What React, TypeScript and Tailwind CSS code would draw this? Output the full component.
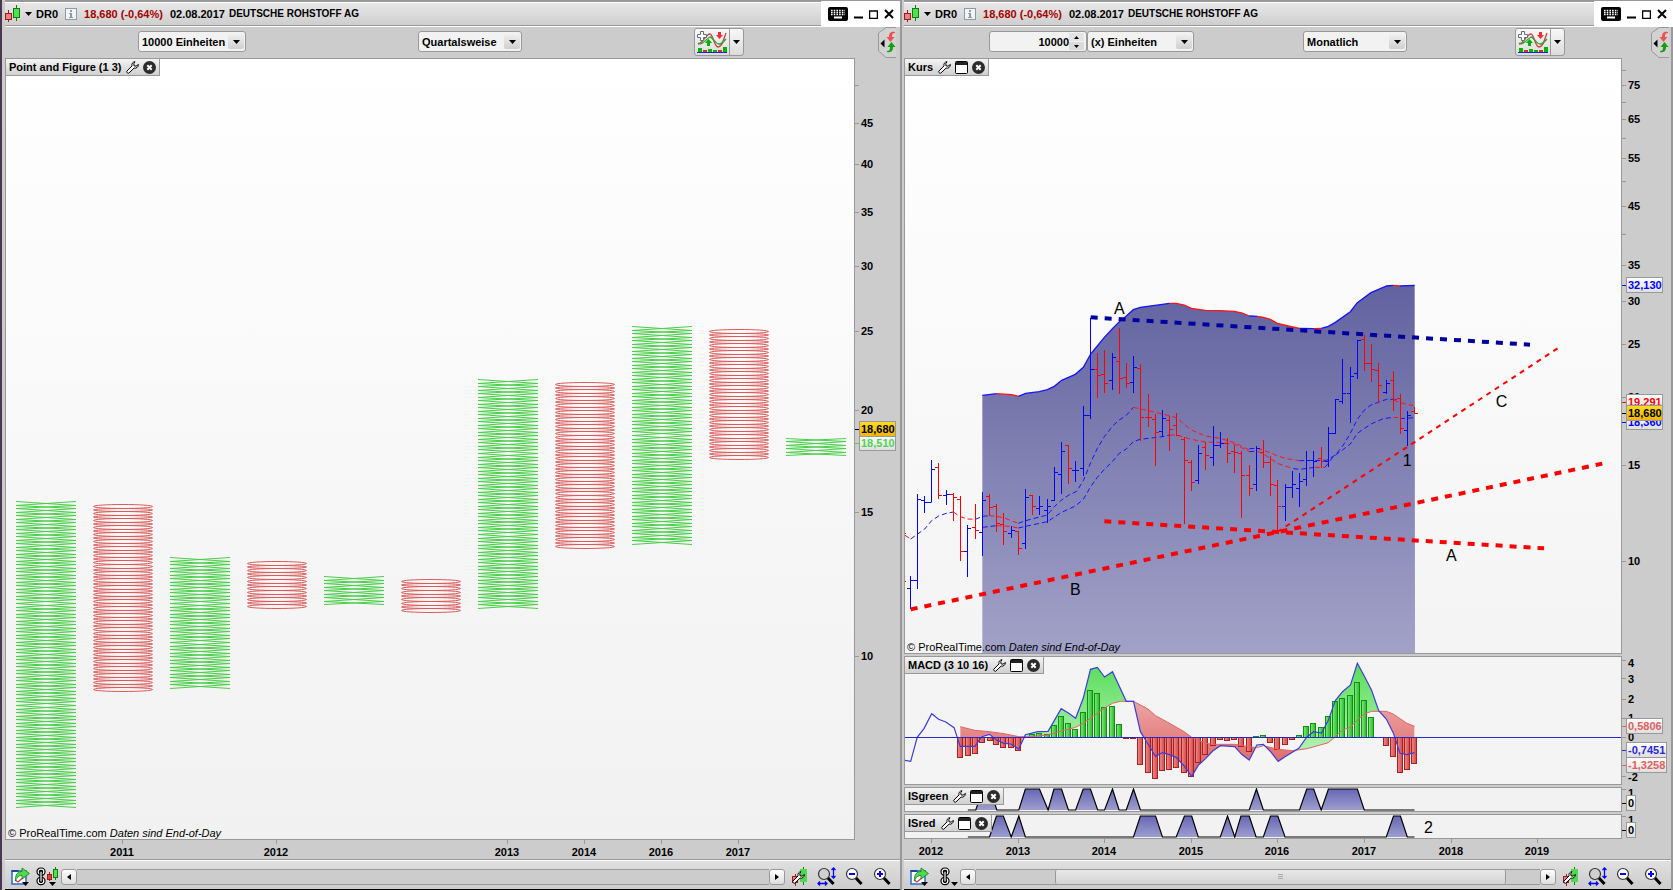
import type { ReactNode } from "react";

type Point = [number, number];

interface Tick {
  y: number;
  label?: string;
  labelY?: number;
}

interface PriceTag {
  y: number;
  label: string;
  color: string;
  width: number;
  highlight?: boolean;
}

// Chart data is kept in thirds of a pixel, measured from the plot's left edge + 15
const sx = (v: number) => (v - 15) / 3;
const mainY = (v: number) => v / 3 + 211;
const macdY = (v: number) => (v - 51) / 3;

const toPriceScale = (points: Point[]): Point[] => points.map(([x, y]) => [x * 1.0332, y]);

const columns = [
  { up: true, top: 442, bottom: 748 },
  { up: false, top: 445, bottom: 632 },
  { up: true, top: 498, bottom: 629 },
  { up: false, top: 502, bottom: 549 },
  { up: true, top: 517, bottom: 545 },
  { up: false, top: 520, bottom: 553 },
  { up: true, top: 320, bottom: 549 },
  { up: false, top: 323, bottom: 489 },
  { up: true, top: 267, bottom: 485 },
  { up: false, top: 270, bottom: 400 },
  { up: true, top: 379, bottom: 396 },
];

// x, high, low, open, close, rising
const bars: [number, number, number, number, number, number][] = [
  [32, 918, 1018, 955, 931, 1], [53, 672, 957, 931, 688, 1], [74, 678, 728, 690, 697, 1],
  [95, 570, 697, 697, 598, 1], [116, 579, 686, 592, 676, 0], [139, 660, 705, 676, 673, 1],
  [160, 669, 753, 673, 683, 0], [181, 678, 873, 688, 844, 0], [202, 765, 920, 844, 774, 1],
  [226, 702, 807, 772, 781, 0], [248, 666, 857, 787, 690, 1], [268, 672, 738, 679, 712, 0],
  [289, 702, 785, 709, 760, 0], [310, 729, 825, 763, 783, 0], [334, 768, 804, 790, 781, 1],
  [355, 783, 855, 784, 835, 0], [377, 657, 837, 820, 682, 1], [397, 675, 735, 676, 709, 0],
  [418, 678, 735, 715, 709, 1], [442, 687, 758, 721, 709, 1], [463, 591, 692, 690, 606, 1],
  [485, 516, 672, 613, 544, 1], [505, 525, 641, 526, 596, 0], [526, 573, 635, 601, 601, 1],
  [550, 408, 618, 595, 436, 1], [572, 145, 446, 436, 298, 1], [592, 249, 384, 298, 316, 0],
  [613, 240, 370, 313, 340, 0], [638, 249, 360, 331, 262, 1], [658, 174, 372, 274, 325, 0],
  [679, 279, 354, 322, 340, 0], [700, 258, 369, 337, 292, 1], [721, 282, 512, 295, 442, 0],
  [745, 372, 471, 442, 442, 0], [767, 432, 587, 448, 487, 0], [788, 420, 500, 484, 445, 1],
  [809, 438, 543, 451, 478, 0], [829, 430, 497, 466, 497, 0], [853, 502, 762, 508, 571, 0],
  [874, 570, 662, 577, 637, 0], [895, 525, 641, 631, 550, 1], [916, 517, 600, 532, 556, 0],
  [940, 468, 588, 562, 526, 1], [961, 486, 534, 526, 520, 1], [982, 504, 579, 520, 550, 0],
  [1003, 525, 609, 545, 548, 0], [1024, 544, 744, 550, 616, 0], [1048, 585, 678, 616, 655, 0],
  [1069, 528, 663, 643, 534, 1], [1090, 510, 594, 547, 577, 0], [1111, 558, 678, 577, 643, 0],
  [1132, 630, 780, 646, 709, 0], [1156, 642, 753, 709, 652, 1], [1177, 603, 684, 652, 643, 1],
  [1198, 609, 711, 655, 634, 1], [1219, 543, 648, 628, 571, 1], [1240, 543, 621, 571, 574, 1],
  [1264, 531, 594, 565, 574, 0], [1285, 471, 591, 574, 490, 1], [1306, 387, 492, 490, 388, 1],
  [1327, 267, 402, 394, 370, 1], [1351, 291, 459, 370, 319, 1], [1372, 210, 327, 310, 211, 1],
  [1393, 195, 303, 208, 280, 0], [1414, 222, 336, 280, 298, 0], [1435, 279, 399, 301, 346, 0],
  [1459, 330, 372, 367, 340, 1], [1480, 303, 423, 331, 388, 0], [1501, 372, 492, 385, 475, 0],
  [1522, 423, 528, 481, 436, 1], [1543, 412, 430, 424, 430, 0],
];

interface Segment {
  up: boolean;
  points: Point[];
}

const upperBand: Segment[] = [
  { up: true, points: [[247, 376], [290, 371]] },
  { up: false, points: [[290, 371], [335, 374], [355, 379]] },
  { up: true, points: [[355, 379], [377, 370], [418, 365], [442, 359], [463, 349], [485, 331], [526, 313], [550, 292], [572, 252], [592, 228], [613, 202], [638, 175], [658, 155], [679, 138], [700, 119], [721, 112], [809, 100]] },
  { up: false, points: [[809, 100], [829, 100], [853, 105], [874, 115], [916, 121], [960, 122], [1003, 124], [1027, 129], [1048, 138]] },
  { up: true, points: [[1048, 138], [1072, 139]] },
  { up: false, points: [[1072, 139], [1090, 142], [1111, 148], [1132, 160], [1165, 168], [1198, 175]] },
  { up: true, points: [[1198, 175], [1242, 176]] },
  { up: false, points: [[1242, 176], [1264, 175]] },
  { up: true, points: [[1264, 175], [1285, 169], [1306, 157], [1351, 125], [1372, 98], [1413, 68], [1460, 48], [1480, 46]] },
  { up: false, points: [[1480, 46], [1500, 48]] },
  { up: true, points: [[1500, 48], [1544, 46]] },
];

const fastAverage: Segment[] = [
  { up: false, points: [[15, 796], [32, 807]] },
  { up: true, points: [[32, 807], [74, 777], [95, 752], [116, 738], [139, 730], [160, 726]] },
  { up: false, points: [[160, 726], [181, 740], [202, 747], [226, 748]] },
  { up: true, points: [[226, 748], [248, 739], [268, 737]] },
  { up: false, points: [[268, 737], [289, 739], [310, 743], [355, 760]] },
  { up: true, points: [[355, 760], [377, 752], [442, 735], [463, 710], [485, 690], [505, 676], [530, 664], [550, 632], [572, 578], [592, 535], [613, 500], [638, 468], [658, 450], [679, 436], [700, 412]] },
  { up: false, points: [[700, 412], [745, 422], [788, 432], [829, 443], [874, 480], [916, 498], [960, 505], [1003, 518], [1024, 528], [1048, 540]] },
  { up: true, points: [[1048, 536], [1072, 535]] },
  { up: false, points: [[1072, 535], [1111, 548], [1132, 558], [1165, 567], [1198, 572]] },
  { up: true, points: [[1198, 572], [1280, 571], [1306, 555], [1327, 530], [1351, 490], [1372, 448], [1393, 420], [1413, 405], [1460, 388], [1480, 388]] },
  { up: false, points: [[1480, 390], [1501, 398], [1522, 403], [1544, 408]] },
];

const slowAverage: Segment[] = [
  { up: true, points: [[248, 772], [290, 767]] },
  { up: false, points: [[290, 767], [330, 769], [355, 774]] },
  { up: true, points: [[355, 774], [377, 769], [442, 755], [485, 727], [526, 708], [550, 688], [572, 650], [592, 622], [613, 598], [638, 574], [658, 550], [679, 537], [700, 515], [720, 508], [788, 500], [809, 495]] },
  { up: false, points: [[809, 495], [829, 495], [874, 508], [916, 516], [960, 518], [1003, 522], [1048, 545]] },
  { up: true, points: [[1048, 545], [1072, 543]] },
  { up: false, points: [[1072, 543], [1100, 558], [1132, 580], [1180, 596]] },
  { up: true, points: [[1180, 596], [1200, 598], [1245, 592]] },
  { up: false, points: [[1245, 592], [1275, 592]] },
  { up: true, points: [[1275, 592], [1300, 560], [1327, 540], [1351, 522], [1372, 490], [1413, 462], [1450, 446], [1480, 442]] },
  { up: false, points: [[1480, 442], [1500, 443]] },
  { up: true, points: [[1500, 446], [1544, 443]] },
];

const macd = toPriceScale([
  [14, 361], [31, 364], [50, 292], [70, 265], [92, 221], [112, 238], [133, 246], [157, 263], [175, 319], [217, 319],
  [238, 290], [260, 283], [280, 300], [302, 310], [322, 312], [345, 327], [364, 284], [400, 275], [430, 274], [468, 206],
  [490, 220], [510, 235], [532, 175], [553, 88], [573, 82], [594, 111], [617, 95], [657, 184], [678, 184], [698, 275],
  [720, 312], [742, 349], [762, 338], [782, 344], [802, 352], [825, 378], [847, 409], [866, 376], [888, 355], [908, 333],
  [930, 317], [972, 320], [992, 343], [1014, 360], [1036, 315], [1055, 313], [1076, 335], [1098, 364], [1118, 350],
  [1158, 325], [1182, 290], [1201, 275], [1224, 279], [1244, 240], [1264, 182], [1285, 155], [1308, 135], [1328, 70],
  [1348, 108], [1369, 150], [1390, 212], [1412, 237], [1432, 278], [1452, 340], [1472, 344], [1494, 338],
]);

const signal = toPriceScale([
  [175, 260], [217, 271], [260, 275], [302, 281], [345, 290], [380, 290], [430, 285], [468, 273], [510, 262], [532, 250],
  [553, 235], [594, 204], [617, 190], [640, 184], [678, 184], [720, 207], [742, 227], [762, 238], [825, 275], [847, 292],
  [888, 310], [908, 313], [972, 313], [1014, 320], [1036, 323], [1055, 317], [1098, 328], [1138, 332], [1182, 326],
  [1244, 308], [1285, 270], [1308, 262], [1328, 240], [1348, 222], [1369, 214], [1412, 214], [1432, 222], [1452, 236],
  [1472, 250], [1494, 259],
]);

const histogram = toPriceScale([
  [175, 352], [196, 346], [218, 340], [239, 306], [260, 301], [279, 313], [299, 321], [322, 322], [343, 331], [384, 282],
  [403, 280], [426, 284], [447, 256], [468, 229], [488, 250], [508, 268], [531, 217], [552, 151], [572, 160], [593, 202],
  [615, 199], [636, 253], [656, 295], [677, 295], [697, 373], [720, 397], [741, 415], [761, 391], [781, 388], [802, 382],
  [825, 397], [845, 409], [866, 367], [886, 343], [909, 317], [930, 298], [950, 301], [970, 298], [990, 319], [1014, 334],
  [1034, 289], [1054, 286], [1075, 307], [1096, 328], [1119, 313], [1138, 298], [1159, 286], [1179, 259], [1200, 250],
  [1222, 262], [1243, 229], [1263, 184], [1283, 175], [1306, 166], [1327, 127], [1348, 181], [1369, 232], [1411, 316],
  [1431, 349], [1452, 397], [1472, 388], [1493, 370],
]);

// Second value is the signal state: 1 = on, 0 = off
const isGreen = toPriceScale([
  [197, 0], [220, 0], [241, 1], [262, 1], [281, 0], [345, 0], [364, 1], [405, 1], [430, 0], [447, 1], [469, 1], [489, 0],
  [510, 0], [532, 1], [553, 1], [574, 0], [594, 0], [617, 1], [636, 0], [657, 0], [678, 1], [698, 0], [1014, 0], [1035, 1],
  [1055, 0], [1160, 0], [1181, 1], [1201, 1], [1223, 0], [1244, 1], [1328, 1], [1348, 0], [1494, 0],
]);

const isRed = toPriceScale([
  [197, 0], [260, 0], [280, 1], [300, 1], [323, 0], [345, 1], [364, 0], [678, 0], [698, 1], [742, 1], [762, 0], [802, 0],
  [826, 1], [847, 1], [866, 0], [930, 0], [951, 1], [972, 0], [990, 1], [1014, 1], [1034, 0], [1055, 0], [1076, 1],
  [1097, 1], [1118, 0], [1412, 0], [1433, 1], [1453, 1], [1473, 0], [1494, 0],
]);

function toPoints(points: Point[], y: (v: number) => number) {
  return points.map(([px, py]) => `${sx(px)},${y(py)}`).join(" ");
}

function valueAt(points: Point[], x: number) {
  const i = points.findIndex(p => p[0] >= x);
  if (i < 0) return points[points.length - 1][1];
  if (i === 0) return points[0][1];
  const [x0, y0] = points[i - 1];
  const [x1, y1] = points[i];
  return y0 + ((y1 - y0) * (x - x0)) / (x1 - x0);
}

function between(from: number, to: number) {
  const pick = (line: Point[]): Point[] => [
    [from, valueAt(line, from)],
    ...line.filter(p => p[0] > from && p[0] < to),
    [to, valueAt(line, to)],
  ];
  return toPoints([...pick(macd), ...pick(signal).reverse()], macdY);
}

/* ---------- icons ---------- */

const wrenchPath =
  "M9 .7C6.500 1 5.500 2.900 6 4.900L.8 10.200c-.5 1 .9 2.400 1.900 2L8.100 7.100c2.300.5 4.200-.9 4.300-3.600L10 5.200 8 4.800 7.800 2.600z";

function CandlesIcon() {
  return (
    <svg width="16" height="18" viewBox="0 0 16 18" aria-hidden="true">
      <path d="M3.5 5v12" stroke="#a01818" />
      <rect x="0.5" y="8.5" width="6" height="6" fill="#f08080" stroke="#a01818" />
      <path d="M11.5 0v16" stroke="#0a800a" />
      <rect x="8.5" y="3.5" width="6" height="9" fill="#50e050" stroke="#0a800a" />
    </svg>
  );
}

function Caret({ className = "" }: { className?: string }) {
  return (
    <svg className={className} width="7" height="4" viewBox="0 0 7 4" aria-hidden="true">
      <path d="M0 0h7L3.5 4z" fill="#000" />
    </svg>
  );
}

function KeyboardIcon() {
  return (
    <svg width="20" height="14" viewBox="0 0 20 14" aria-hidden="true">
      <rect width="20" height="14" rx="2" fill="#000" />
      <path d="M3 3.500h14M3 5.500h14M3 7.500h14" stroke="#fff" strokeWidth="1.300" strokeDasharray="1.600 1.100" />
      <path d="M6 10.500h8" stroke="#fff" strokeWidth="2" />
    </svg>
  );
}

function WrenchIcon() {
  return (
    <svg width="13" height="13" viewBox="0 0 13 13" aria-hidden="true">
      <path d={wrenchPath} fill="#fff" stroke="#000" />
    </svg>
  );
}

function WindowIcon() {
  return (
    <svg width="13" height="13" viewBox="0 0 13 13" aria-hidden="true">
      <rect x="0.5" y="0.5" width="12" height="12" rx="1" fill="#fff" stroke="#000" />
      <path d="M1 1h11v3H1z" fill="#222" />
    </svg>
  );
}

function CloseIcon() {
  return (
    <svg width="13" height="13" viewBox="0 0 13 13" aria-hidden="true">
      <circle cx="6.5" cy="6.5" r="6.5" fill="#2b2b2b" />
      <path d="M4.300 4.300l4.400 4.400M8.700 4.300L4.300 8.700" stroke="#fff" strokeWidth="2" />
    </svg>
  );
}

function IndicatorIcon() {
  return (
    <svg width="30" height="22" viewBox="0 0 30 22" aria-hidden="true">
      <path d="M1 13C6 12 9 3 13 3c3 0 4 13 8 13 4 0 5-6 8-14" fill="none" stroke="#d04040" strokeWidth="1.300" />
      <path d="M1 12c4 3 8-4 12-6 3 0 5 7 9 7 3 0 5-3 7-5" fill="none" stroke="#30a030" strokeWidth="1.300" />
      <path d="M3.500.5h3v3h3v3h-3v3h-3v-3h-3v-3h3z" fill="#fff" stroke="#607080" />
      <path d="M21 1h3v3h2l-3.500 4L19 4h2z" fill="#f03030" />
      <path d="M10 15v-3H8l3.500-4 3.500 4h-2v3z" fill="#00b000" />
      <path d="M1 17h4v4H1zM11 18h4v3h-4zM16 19h4v2h-4zM26 16h4v5h-4z" fill="#00b400" />
      <path d="M6 19h4v2H6zM21 19h4v2h-4z" fill="#d03030" />
      <path d="M0 21.500h30" stroke="#2020e0" />
    </svg>
  );
}

function CollapseTab() {
  return (
    <button aria-label="Seitenleiste" className="self-start">
      <svg width="18" height="31" viewBox="0 0 18 31" aria-hidden="true">
        <path d="M18 .5H8L.5 6v18L8 30.500h10" fill="#d2d2d2" stroke="#999" />
        <path d="M6.500 12.500v8l-4-4z" fill="#000" />
        <path d="M17 5c-5-1-6 2-6 5H8.500l4 5 4-5h-2.500c0-3 .5-4 3-4z" fill="#f05050" />
        <path d="M9 25c5 1 6-2 6-5h2.500l-4-5-4 5H12c0 3-.5 4-3 4z" fill="#10a010" />
      </svg>
    </button>
  );
}

function ShareIcon() {
  return (
    <svg width="19" height="19" viewBox="0 0 19 19" aria-hidden="true">
      <rect x="1" y="4" width="14" height="13" fill="#fff" stroke="#2868c8" strokeWidth="1.500" />
      <path d="M0.500 4h7" stroke="#1848a0" strokeWidth="2" />
      <path d="M4 13l3 2 6-5" fill="none" stroke="#e03030" strokeWidth="1.300" />
      <path d="M4.500 14C4 7 7 4.500 11 4.500V1l7.500 5.500L11 12V8.500C8 8.500 6 10 4.500 14z" fill="#50d850" stroke="#108010" strokeWidth=".8" />
      <path d="M11 15h7l-3.500 4z" fill="#000" />
    </svg>
  );
}

function ChainIcon() {
  return (
    <svg width="10" height="19" viewBox="0 0 10 19" aria-hidden="true">
      <g fill="none" stroke="#000" strokeWidth="3.600">
        <rect x="2.200" y="2.200" width="5.600" height="5" rx="2.400" />
        <rect x="2.200" y="11.500" width="5.600" height="5" rx="2.400" />
      </g>
      <g fill="none" stroke="#fff" strokeWidth="1.200">
        <rect x="2.200" y="2.200" width="5.600" height="5" rx="2.400" />
        <rect x="2.200" y="11.500" width="5.600" height="5" rx="2.400" />
      </g>
      <path d="M5 5v9" stroke="#000" strokeWidth="3.400" strokeLinecap="round" />
      <path d="M5 5v9" stroke="#fff" strokeWidth="1.200" strokeLinecap="round" />
    </svg>
  );
}

function SmallCandlesIcon() {
  return (
    <svg width="12" height="19" viewBox="0 0 12 19" aria-hidden="true">
      <path d="M2.500 5v9" stroke="#a01818" />
      <rect x="0.500" y="7.500" width="4" height="5" fill="#e04040" stroke="#a01818" />
      <path d="M8.500 0v13" stroke="#0a800a" />
      <rect x="6.500" y="2.500" width="4" height="8" fill="#50e050" stroke="#0a800a" />
      <path d="M2 15h7l-3.500 4z" fill="#000" />
    </svg>
  );
}

function SettingsIcon() {
  return (
    <svg width="16" height="19" viewBox="0 0 16 19" aria-hidden="true">
      <path d="M3.500 7v12" stroke="#a01818" />
      <rect x="0.500" y="9.500" width="5" height="6" fill="#e88080" stroke="#a01818" />
      <path d="M11.500 0v18" stroke="#0a800a" />
      <rect x="8.500" y="2.500" width="6" height="12" fill="#50d850" stroke="#50d850" />
      <path d={wrenchPath} transform="translate(0 4)" fill="#fff" stroke="#000" />
    </svg>
  );
}

function ZoomIcon({ kind }: { kind: "fit" | "out" | "in" }) {
  return (
    <svg width="19" height="19" viewBox="0 0 19 19" aria-hidden="true">
      <path d="M10.500 10.500l6 6.500" stroke="#000" strokeWidth="3" />
      <circle cx="7" cy="7" r="5.500" fill={kind === "fit" ? "#d0d0d0" : "#fff"} stroke="#333" strokeWidth="1.200" />
      {kind !== "fit" && <path d="M4 7h6" stroke="#0000ff" strokeWidth="2" />}
      {kind === "in" && <path d="M7 4v6" stroke="#0000ff" strokeWidth="2" />}
      {kind === "fit" && (
        <path
          d="M16.500 1v10M14.500 3l2-2 2 2M14.500 9l2 2 2-2M1 16.500h9M3 14.500l-2 2 2 2M8 14.500l2 2-2 2"
          fill="none"
          stroke="#0000ff"
          strokeWidth="1.300"
        />
      )}
    </svg>
  );
}

/* ---------- window parts ---------- */

function TitleBar({ className = "" }: { className?: string }) {
  return (
    <header className={`flex h-[27px] border-t-2 border-[#999] ${className}`}>
      <div className="flex min-w-0 flex-1 flex-col border-b border-white">
        <div className="flex flex-1 items-center overflow-hidden border-t border-b border-t-white border-b-[#999] bg-gradient-to-b from-[#e8e8e8] to-[#cecece] whitespace-nowrap">
          <CandlesIcon />
          <button aria-label="Instrument" className="ml-1">
            <Caret />
          </button>
          <span className="ml-1">DR0</span>
          <button aria-label="Info" className="ml-[7px] h-3 w-3 border border-[#8a9aa8] bg-[#f4f4f4]">
            <svg viewBox="0 0 10 10" aria-hidden="true">
              <path d="M4 1h2v2H4zM3 4h3v4h1v1H3V8h1V5H3z" fill="#8a9aa8" />
            </svg>
          </button>
          <span className="ml-[7px] text-[#a50000]">18,680 (-0,64%)</span>
          <span className="ml-[7px]">02.08.2017</span>
          <span className="ml-1 text-[10px]">DEUTSCHE ROHSTOFF AG</span>
        </div>
      </div>
      <div className="-mt-px flex w-[79px] items-center gap-[6px] bg-white pl-[7px]">
        <button aria-label="Tastatur">
          <KeyboardIcon />
        </button>
        <button aria-label="Minimieren">
          <svg width="9" height="10" aria-hidden="true">
            <path d="M0 8.500h9" stroke="#000" strokeWidth="2" />
          </svg>
        </button>
        <button aria-label="Maximieren">
          <svg width="9" height="9" aria-hidden="true">
            <path d="M.5 1v7.500h8V1M0 1h9" fill="none" stroke="#000" strokeWidth="1.500" />
          </svg>
        </button>
        <button aria-label="Schliessen">
          <svg width="10" height="10" viewBox="0 0 10 10" aria-hidden="true">
            <path d="M1 1l8 8M9 1L1 9" stroke="#000" strokeWidth="2" />
          </svg>
        </button>
      </div>
    </header>
  );
}

function Select({ label, options }: { label: string; options: string[] }) {
  return (
    <div className="relative h-[21px]">
      <select
        aria-label={label}
        className="h-full w-full appearance-none rounded-[3px] border border-[#999] bg-[#f2f2f2] pl-[3px] text-[11px] font-bold"
      >
        {options.map(option => (
          <option key={option}>{option}</option>
        ))}
      </select>
      <span className="pointer-events-none absolute top-[3px] right-[2px] flex h-[15px] w-4 items-center justify-center rounded-[2px] bg-gradient-to-b from-[#f0f0f0] to-[#d0d0d0]">
        <Caret />
      </span>
    </div>
  );
}

function IndicatorButton() {
  return (
    <div className="mt-px flex h-7 w-[50px] self-start overflow-hidden rounded-[3px] border border-[#999] bg-gradient-to-b from-[#f8f8f8] to-[#dcdcdc]">
      <button aria-label="Indikator" className="flex flex-1 items-center justify-center">
        <IndicatorIcon />
      </button>
      <button aria-label="Indikatorliste" className="flex w-[14px] items-center justify-center border-l border-[#999]">
        <Caret />
      </button>
    </div>
  );
}

function PanelTag({ title, detachable }: { title: string; detachable?: boolean }) {
  return (
    <div className="absolute top-0 left-0 flex h-[17px] items-center gap-1 border-r border-b border-[#999] bg-gradient-to-b from-[#f4f4f4] to-[#d0d0d0] pr-[3px] pl-[3px]">
      <span className="mr-px">{title}</span>
      <button aria-label={`${title} einstellen`}>
        <WrenchIcon />
      </button>
      {detachable && (
        <button aria-label={`${title} maximieren`}>
          <WindowIcon />
        </button>
      )}
      <button aria-label={`${title} entfernen`}>
        <CloseIcon />
      </button>
    </div>
  );
}

function Axis({ ticks, tags, className }: { ticks: Tick[]; tags: PriceTag[]; className: string }) {
  return (
    <svg className={className}>
      {ticks.map(tick => (
        <g key={tick.y}>
          <path d={`M0 ${tick.y + 0.5}h4`} stroke="#999" />
          {tick.label && (
            <text x="6" y={tick.labelY ?? tick.y + 4} fill="#000">
              {tick.label}
            </text>
          )}
        </g>
      ))}
      {tags.map(tag => (
        <g key={tag.label}>
          <path d={`M0 ${tag.y + 0.5}h4`} stroke={tag.color} />
          <rect
            x="4.5"
            y={tag.y - 7.5}
            width={tag.width}
            height="15"
            fill={tag.highlight ? "url(#tagGold)" : "url(#tagGrey)"}
            stroke="#999"
          />
          <text x="6" y={tag.y + 4} fill={tag.color}>
            {tag.label}
          </text>
        </g>
      ))}
    </svg>
  );
}

function Panel({ className, axis, children }: { className: string; axis: ReactNode; children: ReactNode }) {
  return (
    <div className={`flex ${className}`}>
      <div className="relative flex min-w-0 flex-1 border border-[#999]">{children}</div>
      {axis}
    </div>
  );
}

function TimeAxis({ labels, className }: { labels: [number, string][]; className: string }) {
  return (
    <svg className={`w-full ${className}`}>
      {labels.map(([x, label]) => (
        <g key={label}>
          <path d={`M${x + 0.5} 0v4`} stroke="#999" />
          <text x={x} y="16" textAnchor="middle" fill="#000">
            {label}
          </text>
        </g>
      ))}
    </svg>
  );
}

function ScrollButton({ left }: { left?: boolean }) {
  return (
    <button
      aria-label={left ? "Zurück" : "Vor"}
      className="flex h-4 w-4 items-center justify-center rounded-[3px] border border-[#999] bg-gradient-to-b from-white to-[#ddd]"
    >
      <svg width="4" height="6" aria-hidden="true">
        <path d={left ? "M4 0v6L0 3z" : "M0 0v6l4-3z"} fill="#000" />
      </svg>
    </button>
  );
}

function Footer({ linked, thumb }: { linked?: boolean; thumb?: boolean }) {
  return (
    <footer className="flex h-[31px] flex-col border-t border-b border-t-[#999] border-b-black">
      <div className="flex flex-1 items-center border-t border-white bg-gradient-to-b from-[#e0e0e0] to-[#cccccc] pt-[3px] pr-2 pl-[6px]">
        <button aria-label="Teilen">
          <ShareIcon />
        </button>
        <button aria-label="Verknüpfen" className={`flex items-end gap-px ${linked ? "ml-[6px]" : "ml-[11px]"}`}>
          <ChainIcon />
          {linked ? <SmallCandlesIcon /> : <Caret />}
        </button>
        <div className="ml-[2px] flex min-w-0 flex-1 items-center">
          <ScrollButton left />
          <div className="flex h-4 min-w-0 flex-1 border-y border-[#999] bg-[#ccc]">
            {thumb && (
              <div className="ml-[14%] flex w-[80%] items-center justify-center rounded-[2px] border-x border-[#999] bg-gradient-to-b from-[#e8e8e8] to-[#d4d4d4]">
                <svg width="5" height="6" aria-hidden="true">
                  <path d="M0 .5h5M0 2.500h5M0 4.500h5" stroke="#aaa" />
                </svg>
              </div>
            )}
          </div>
          <ScrollButton />
        </div>
        <div className="ml-[7px] flex items-center gap-[9px]">
          <button aria-label="Einstellungen">
            <SettingsIcon />
          </button>
          <button aria-label="Zoom anpassen">
            <ZoomIcon kind="fit" />
          </button>
          <button aria-label="Verkleinern">
            <ZoomIcon kind="out" />
          </button>
          <button aria-label="Vergrössern">
            <ZoomIcon kind="in" />
          </button>
        </div>
      </div>
    </footer>
  );
}

function Copyright() {
  return (
    <p className="absolute bottom-0 left-[2px] text-[11px] leading-3 font-normal">
      © ProRealTime.com <i>Daten sind End-of-Day</i>
    </p>
  );
}

/* ---------- charts ---------- */

function PointAndFigure() {
  return (
    <svg className="min-w-0 flex-1">
      {columns.map((column, i) => {
        const x = 10 + i * 77;
        const height = column.bottom - column.top;
        const count = Math.round(height / 3.526);
        const edge = (n: number) => Math.round(column.top + (n * height) / count) + 0.5;
        return (
          <g key={x} fill="none" stroke={column.up ? "#46cf46" : "#dc5a5a"}>
            {Array.from({ length: count }, (_, n) => {
              const top = edge(n);
              const bottom = edge(n + 1);
              return column.up ? (
                <path key={n} d={`M${x} ${top}L${x + 60} ${bottom}M${x + 60} ${top}L${x} ${bottom}`} />
              ) : (
                <ellipse key={n} cx={x + 30} cy={(top + bottom) / 2} rx="29.5" ry={(bottom - top) / 2} />
              );
            })}
          </g>
        );
      })}
    </svg>
  );
}

function Lines({ segments, dash }: { segments: Segment[]; dash?: string }) {
  return (
    <>
      {segments.map(segment => (
        <polyline
          key={segment.points[0].join()}
          points={toPoints(segment.points, mainY)}
          fill="none"
          stroke={segment.up ? "#1414ff" : "#ff1414"}
          strokeWidth={dash ? 1 : 1.3}
          strokeDasharray={dash}
        />
      ))}
    </>
  );
}

function PriceChart() {
  const band = upperBand.flatMap(segment => segment.points);
  return (
    <svg className="min-w-0 flex-1">
      <defs>
        <linearGradient id="band" gradientUnits="userSpaceOnUse" x1="0" y1="226" x2="0" y2="594">
          <stop offset="0" stopColor="#6262a0" />
          <stop offset="1" stopColor="#a2a2c8" />
        </linearGradient>
      </defs>
      <polygon
        points={`${toPoints(band, mainY)} ${sx(1545)},595 ${sx(247)},595`}
        fill="url(#band)"
      />
      <Lines segments={upperBand} />
      <Lines segments={fastAverage} dash="5 3" />
      <Lines segments={slowAverage} dash="5 3" />
      <path d="M0 522.5h1M0 474.5h1" stroke="#f00" />
      {bars.map(([x, high, low, open, close, rising]) => {
        const cx = Math.round(sx(x) - 0.5) + 0.5;
        const row = (v: number) => Math.round(mainY(v) - 0.5) + 0.5;
        return (
          <path
            key={x}
            d={`M${cx} ${Math.round(mainY(high))}V${Math.round(mainY(low))}M${cx - 3.5} ${row(open)}h3.5M${cx} ${row(close)}h3.5`}
            stroke={rising ? "#0000ff" : "#ff0000"}
          />
        );
      })}
      <g strokeWidth="4" strokeDasharray="7 7">
        <path d={`M${sx(572)} ${mainY(142)}L${sx(1890)} ${mainY(224)}`} stroke="#0000a0" />
        <path d={`M${sx(613)} ${mainY(754)}L${sx(1932)} ${mainY(835)}`} stroke="#ff0000" />
        <path d={`M${sx(32)} ${mainY(1018)}L${sx(2107)} ${mainY(581)}`} stroke="#ff0000" />
      </g>
      <path
        d={`M${sx(1132)} ${mainY(786)}L${sx(1973)} ${mainY(235)}`}
        stroke="#ff0000"
        strokeWidth="2"
        strokeDasharray="5 5"
      />
      <g className="text-base font-normal" fill="#000">
        <text x={sx(642)} y={mainY(131)}>A</text>
        <text x={sx(1638)} y={mainY(873)}>A</text>
        <text x={sx(510)} y={mainY(976)}>B</text>
        <text x={sx(1787)} y={mainY(410)}>C</text>
        <text x={sx(1508)} y={mainY(588)}>1</text>
      </g>
    </svg>
  );
}

function MacdChart() {
  const zero = 80;
  return (
    <svg className="min-w-0 flex-1">
      <defs>
        <linearGradient id="macdUp" gradientUnits="userSpaceOnUse" x1="0" y1="8" x2="0" y2="90">
          <stop offset="0" stopColor="#5ade5a" />
          <stop offset="1" stopColor="#b0efb0" />
        </linearGradient>
        <linearGradient id="macdDown" gradientUnits="userSpaceOnUse" x1="0" y1="45" x2="0" y2="118">
          <stop offset="0" stopColor="#eba4a4" />
          <stop offset="1" stopColor="#de6060" />
        </linearGradient>
        <linearGradient id="barUp">
          <stop offset="0" stopColor="#7cf07c" />
          <stop offset="1" stopColor="#2cb42c" />
        </linearGradient>
        <linearGradient id="barDown">
          <stop offset="0" stopColor="#f08c8c" />
          <stop offset="1" stopColor="#d24848" />
        </linearGradient>
      </defs>
      <polygon points={between(181, 367)} fill="url(#macdDown)" />
      <polygon points={between(367, 700)} fill="url(#macdUp)" />
      <polygon points={between(700, 1066)} fill="url(#macdDown)" />
      <polygon points={between(1066, 1094)} fill="url(#macdUp)" />
      <polygon points={between(1094, 1184)} fill="url(#macdDown)" />
      <polygon points={between(1184, 1436)} fill="url(#macdUp)" />
      <polygon points={between(1436, 1543)} fill="url(#macdDown)" />
      {histogram.map(([x, v]) => {
        const y = Math.round(macdY(v) - 0.5) + 0.5;
        const up = y < zero;
        return (
          <rect
            key={x}
            x={Math.round(sx(x)) - 2.5}
            y={up ? y : zero + 0.5}
            width="5"
            height={up ? zero + 0.5 - y : y - zero - 0.5}
            fill={up ? "url(#barUp)" : "url(#barDown)"}
            stroke={up ? "#109010" : "#a82020"}
          />
        );
      })}
      <polyline points={toPoints(signal, macdY)} fill="none" stroke="#e06464" />
      <polyline points={toPoints(macd, macdY)} fill="none" stroke="#3c3cdc" strokeWidth="1.2" />
      <path d="M0 80.5h2000" stroke="#2828c8" />
    </svg>
  );
}

function StateChart({ data, note }: { data: Point[]; note?: string }) {
  const points = toPoints(data, v => (v ? 1 : 22));
  return (
    <svg className="min-w-0 flex-1">
      <defs>
        <linearGradient id="state" gradientUnits="userSpaceOnUse" x1="0" y1="0" x2="0" y2="23">
          <stop offset="0" stopColor="#6464b4" />
          <stop offset="1" stopColor="#a0a0d0" />
        </linearGradient>
      </defs>
      <polyline points={points} fill="url(#state)" stroke="#000" strokeWidth="1.2" />
      {note && (
        <text className="text-base font-normal" x="519" y="18" fill="#000">
          {note}
        </text>
      )}
    </svg>
  );
}

const leftTicks: Tick[] = [
  { y: 27 }, { y: 65, label: "45" }, { y: 106, label: "40" }, { y: 154, label: "35" }, { y: 208, label: "30" },
  { y: 273, label: "25" }, { y: 352, label: "20" }, { y: 454, label: "15" }, { y: 598, label: "10" },
];

const rightTicks: Tick[] = [
  { y: 12 }, { y: 27, label: "75" }, { y: 44 }, { y: 61, label: "65" }, { y: 80 }, { y: 100, label: "55" }, { y: 123 },
  { y: 148, label: "45" }, { y: 176 }, { y: 207, label: "35" }, { y: 243, label: "30" }, { y: 286, label: "25" },
  { y: 339, label: "20" }, { y: 407, label: "15" }, { y: 503, label: "10" },
];

const macdTicks: Tick[] = [
  { y: 4, label: "4", labelY: 11 }, { y: 22, label: "3", labelY: 27 }, { y: 43, label: "2" }, { y: 62, label: "1" },
  { y: 81, label: "0" }, { y: 120, label: "-2", labelY: 125 },
];

const stateTicks: Tick[] = [{ y: 2, label: "1", labelY: 10 }];

export default function App() {
  return (
    <main className="grid min-h-screen grid-cols-[900fr_773fr] bg-[#ccc] font-['Liberation_Sans',Arial,sans-serif] text-[11px] leading-4 font-bold text-black">
      <svg className="absolute h-0 w-0" aria-hidden="true">
        <defs>
          <linearGradient id="tagGrey" x2="0" y2="1">
            <stop offset="0" stopColor="#fff" />
            <stop offset="1" stopColor="#dedede" />
          </linearGradient>
          <linearGradient id="tagGold" x2="0" y2="1">
            <stop offset="0" stopColor="#ffdc28" />
            <stop offset="1" stopColor="#f0b400" />
          </linearGradient>
        </defs>
      </svg>

      <section className="flex min-w-0 flex-col border-l-2 border-[#4a3650] pl-[3px]">
        <TitleBar />
        <div className="grid h-[31px] grid-cols-[133fr_108px_172fr_104px_172fr_50px_134fr_18px] items-start pr-1 [&>*]:mt-1 [&>*:nth-child(6)]:mt-px [&>*:last-child]:mt-0">
          <span />
          <Select label="Einheiten" options={["10000 Einheiten"]} />
          <span />
          <Select label="Zeitraum" options={["Quartalsweise"]} />
          <span />
          <IndicatorButton />
          <span />
          <CollapseTab />
        </div>
        <Panel
          className="min-h-[600px] flex-1"
          axis={
            <Axis
              className="w-[45px]"
              ticks={leftTicks}
              tags={[
                { y: 385, label: "18,510", color: "#50d250", width: 36 },
                { y: 371, label: "18,680", color: "#000", width: 36, highlight: true },
              ]}
            />
          }
        >
          <div className="flex min-w-0 flex-1 bg-gradient-to-b from-white to-[#f1f1f1]">
            <PointAndFigure />
          </div>
          <PanelTag title="Point and Figure (1 3)" />
          <Copyright />
        </Panel>
        <TimeAxis
          className="h-[19px]"
          labels={[[117, "2011"], [271, "2012"], [502, "2013"], [579, "2014"], [656, "2016"], [733, "2017"]]}
        />
        <Footer linked />
      </section>

      <section className="flex min-w-0 flex-col border-x-2 border-[#999] pl-[2px]">
        <TitleBar className="-mr-[2px]" />
        <div className="grid h-[31px] grid-cols-[85fr_98px_107px_109fr_104px_108fr_50px_86fr_18px] items-start pr-[2px] [&>*]:mt-1 [&>*:nth-child(7)]:mt-px [&>*:last-child]:mt-0">
          <span />
          <div className="flex h-[21px] items-center rounded-[3px] border border-[#999] bg-[#f2f2f2] pr-[2px]">
            <input
              type="text"
              inputMode="numeric"
              aria-label="Anzahl"
              defaultValue="10000"
              className="h-full min-w-0 flex-1 bg-transparent text-right text-[11px] font-bold"
            />
            <div className="flex w-[15px] flex-col items-center gap-px">
              <button aria-label="Mehr" className="flex h-2 w-full items-center justify-center bg-[#e4e4e4]">
                <Caret className="h-[3px] w-[5px] rotate-180" />
              </button>
              <button aria-label="Weniger" className="flex h-2 w-full items-center justify-center bg-[#dadada]">
                <Caret className="h-[3px] w-[5px]" />
              </button>
            </div>
          </div>
          <Select label="Einheit" options={["(x) Einheiten"]} />
          <span />
          <Select label="Zeitraum" options={["Monatlich"]} />
          <span />
          <IndicatorButton />
          <span />
          <CollapseTab />
        </div>
        <div className="flex flex-1 flex-col gap-[2px]">
          <Panel
            className="min-h-[480px] flex-1"
            axis={
              <Axis
                className="w-[49px]"
                ticks={rightTicks}
                tags={[
                  { y: 227, label: "32,130", color: "#0000ff", width: 36 },
                  { y: 344, label: "19,291", color: "#ff0000", width: 36 },
                  { y: 364, label: "18,360", color: "#0000ff", width: 36 },
                  { y: 355, label: "18,680", color: "#000", width: 36, highlight: true },
                ]}
              />
            }
          >
            <div className="flex min-w-0 flex-1 bg-gradient-to-b from-white to-[#f4f4f4]">
              <PriceChart />
            </div>
            <PanelTag title="Kurs" detachable />
            <Copyright />
          </Panel>
          <Panel
            className="h-[129px]"
            axis={
              <Axis
                className="w-[49px]"
                ticks={macdTicks}
                tags={[
                  { y: 70, label: "0,5806", color: "#e06060", width: 36 },
                  { y: 94, label: "-0,7451", color: "#2828dc", width: 40 },
                  { y: 109, label: "-1,3258", color: "#e06060", width: 40 },
                ]}
              />
            }
          >
            <div className="flex min-w-0 flex-1 bg-[#f4f4f4]">
              <MacdChart />
            </div>
            <PanelTag title="MACD (3 10 16)" detachable />
          </Panel>
          <Panel
            className="h-[25px]"
            axis={
              <Axis
                className="w-[49px] overflow-visible"
                ticks={stateTicks}
                tags={[{ y: 16, label: "0", color: "#000", width: 9 }]}
              />
            }
          >
            <div className="flex min-w-0 flex-1 bg-[#f2f2f2]">
              <StateChart data={isGreen} />
            </div>
            <PanelTag title="ISgreen" detachable />
          </Panel>
          <Panel
            className="h-[25px]"
            axis={
              <Axis
                className="w-[49px] overflow-visible"
                ticks={stateTicks}
                tags={[{ y: 16, label: "0", color: "#000", width: 9 }]}
              />
            }
          >
            <div className="flex min-w-0 flex-1 bg-[#f2f2f2]">
              <StateChart data={isRed} note="2" />
            </div>
            <PanelTag title="ISred" detachable />
          </Panel>
        </div>
        <TimeAxis
          className="h-5"
          labels={[
            [27, "2012"], [114, "2013"], [200, "2014"], [287, "2015"],
            [373, "2016"], [460, "2017"], [547, "2018"], [633, "2019"],
          ]}
        />
        <Footer thumb />
      </section>
    </main>
  );
}
